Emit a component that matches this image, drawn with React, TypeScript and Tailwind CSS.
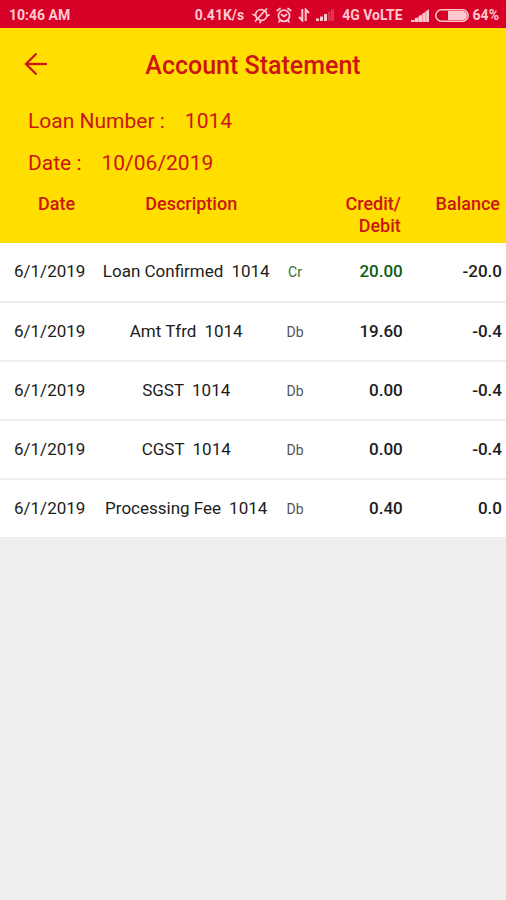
import clsx from 'clsx'

type EntryType = 'Cr' | 'Db'

interface Entry {
  date: string
  description: string
  ref: string
  type: EntryType
  amount: string
  balance: string
}

const loanNumber = '1014'
const statementDate = '10/06/2019'

const entries: Entry[] = [
  { date: '6/1/2019', description: 'Loan Confirmed', ref: loanNumber, type: 'Cr', amount: '20.00', balance: '-20.0' },
  { date: '6/1/2019', description: 'Amt Tfrd', ref: loanNumber, type: 'Db', amount: '19.60', balance: '-0.4' },
  { date: '6/1/2019', description: 'SGST', ref: loanNumber, type: 'Db', amount: '0.00', balance: '-0.4' },
  { date: '6/1/2019', description: 'CGST', ref: loanNumber, type: 'Db', amount: '0.00', balance: '-0.4' },
  { date: '6/1/2019', description: 'Processing Fee', ref: loanNumber, type: 'Db', amount: '0.40', balance: '0.0' },
]

function MutedBellIcon() {
  return (
    <svg width="18" height="18" viewBox="0 0 18 18" fill="none" stroke="currentColor" strokeWidth="1.7" strokeLinecap="round" strokeLinejoin="round" aria-hidden="true">
      <path d="M3.500 9.500C3.500 5.500 6 3.500 9.500 3.500L14 5.500l1 4.500c-1 3-3 4.500-6 4.500L5 12.500z" />
      <path d="M3.500 15 14.500 3" />
      <path d="M1 8.500 3.500 9.500M17 9l-2 1M8 16.500l1-2" />
    </svg>
  )
}

function AlarmIcon() {
  return (
    <svg width="16" height="16" viewBox="0 0 16 16" fill="none" stroke="currentColor" strokeWidth="1.8" strokeLinecap="round" strokeLinejoin="round" aria-hidden="true">
      <circle cx="8" cy="8.800" r="5.600" />
      <path d="M5.500 7.500 8 9.500l2.600-2" />
      <path d="M1.300 3.500 4 1.500M14.700 3.500 12 1.500M4 13.500l-1 1.300M12 13.500l1 1.300" />
    </svg>
  )
}

function DataIcon() {
  return (
    <svg width="12" height="14" viewBox="0 0 12 14" fill="none" stroke="currentColor" strokeWidth="2" aria-hidden="true">
      <path d="M4.300 1v11.500L1 9" />
      <path d="M7.700 13V1.500L11 5" />
    </svg>
  )
}

function WeakSignalIcon() {
  return (
    <svg width="18" height="12" viewBox="0 0 18 12" fill="currentColor" aria-hidden="true">
      <path d="M0 9.500h3V12H0zM4 7.500h3V12H4zM8 5h3v7H8z" />
      <path d="M12 2.500h2.500V12H12zM15 0h3v12h-3z" opacity=".25" />
    </svg>
  )
}

function SignalIcon() {
  return (
    <svg width="18" height="13" viewBox="0 0 18 13" fill="currentColor" aria-hidden="true">
      <path d="M0 13 18 0v13z" opacity=".7" />
      <path d="M0 11h3v2H0zM4 9h3v4H4zM8 6.500h3V13H8zM12 4h2.500v9H12zM15.500 1.500H18V13h-2.500z" />
    </svg>
  )
}

function BatteryIcon() {
  return (
    <svg width="34" height="13" viewBox="0 0 34 13" fill="none" aria-hidden="true">
      <rect x="0.800" y="0.800" width="32.400" height="11.400" rx="5.700" stroke="currentColor" strokeWidth="1.500" />
      <path d="M13 2h14.500a4.500 4.500 0 0 1 0 9H13z" fill="currentColor" />
    </svg>
  )
}

function StatusBar() {
  return (
    <div className="flex h-7 items-center justify-between bg-[#d70026] pt-0.5 pr-[7px] pl-[9px] text-sm font-bold text-[#ffc9cf]">
      <span>10:46 AM</span>
      <div className="flex items-center">
        <span className="mr-2">0.41K/s</span>
        <MutedBellIcon />
        <span className="ml-1.5 flex items-center gap-1.5">
          <AlarmIcon />
          <DataIcon />
          <WeakSignalIcon />
        </span>
        <span className="mx-2">4G VoLTE</span>
        <SignalIcon />
        <span className="mr-1 ml-1.5">
          <BatteryIcon />
        </span>
        <span>64%</span>
      </div>
    </div>
  )
}

function BackArrow() {
  return (
    <svg width="24" height="24" viewBox="0 0 24 24" fill="none" stroke="currentColor" strokeWidth="2.2" aria-hidden="true">
      <path d="M23 12H2" />
      <path d="M12.500 1.500 2 12l10.500 10.500" />
    </svg>
  )
}

export default function App() {
  return (
    <div className="min-h-screen bg-[#eeeeee] font-[Roboto,sans-serif] text-[#1c1c1c]">
      <StatusBar />

      <header className="bg-[#ffde00] text-[#cc1414]">
        <div className="grid grid-cols-[72px_1fr_72px] items-start pt-5">
          <button type="button" aria-label="Back" className="mt-1 justify-self-center">
            <BackArrow />
          </button>
          <h1 className="text-center text-[25px] leading-9 font-medium">Account Statement</h1>
        </div>

        <dl className="flex flex-col gap-3 px-7 pt-[22px] pb-3 text-[21px] leading-[30px]">
          <div className="flex gap-5">
            <dt>Loan Number :</dt>
            <dd>{loanNumber}</dd>
          </div>
          <div className="flex gap-5">
            <dt>Date :</dt>
            <dd>{statementDate}</dd>
          </div>
        </dl>
      </header>

      <table className="w-full table-fixed border-collapse">
        <colgroup>
          <col className="w-[20%]" />
          <col className="w-[34%]" />
          <col className="w-[9%]" />
          <col className="w-[17%]" />
          <col className="w-[20%]" />
        </colgroup>
        <thead className="bg-[#ffde00] text-lg leading-[22px] text-[#cc1414]">
          <tr className="align-top">
            <th scope="col" className="pt-[3px] pb-1.5 pl-3 font-medium">Date</th>
            <th scope="col" className="pt-[3px] pb-1.5 pl-2 font-medium">Description</th>
            <td />
            <th scope="col" className="pt-[3px] pr-1 pb-1.5 text-right font-medium">
              Credit/
              <br />
              Debit
            </th>
            <th scope="col" className="pt-[3px] pr-1.5 pb-1.5 text-right font-medium">Balance</th>
          </tr>
        </thead>
        <tbody>
          {entries.map((entry) => (
            <tr key={entry.description} className="h-[59px] border-b-2 border-[#eeeeee] bg-white text-[17px]">
              <td className="pl-3.5">{entry.date}</td>
              <td className="pr-0.5 text-center whitespace-nowrap">
                {entry.description}
                <span className="ml-2">{entry.ref}</span>
              </td>
              <td className={clsx('pr-0.5 text-center text-sm', entry.type === 'Cr' ? 'text-[#2f6f35]' : 'text-[#555555]')}>
                {entry.type}
              </td>
              <td className={clsx('pr-0.5 text-right font-medium', entry.type === 'Cr' && 'text-[#0b5c14]')}>
                {entry.amount}
              </td>
              <td className="pr-1 text-right font-medium">{entry.balance}</td>
            </tr>
          ))}
        </tbody>
      </table>
    </div>
  )
}
